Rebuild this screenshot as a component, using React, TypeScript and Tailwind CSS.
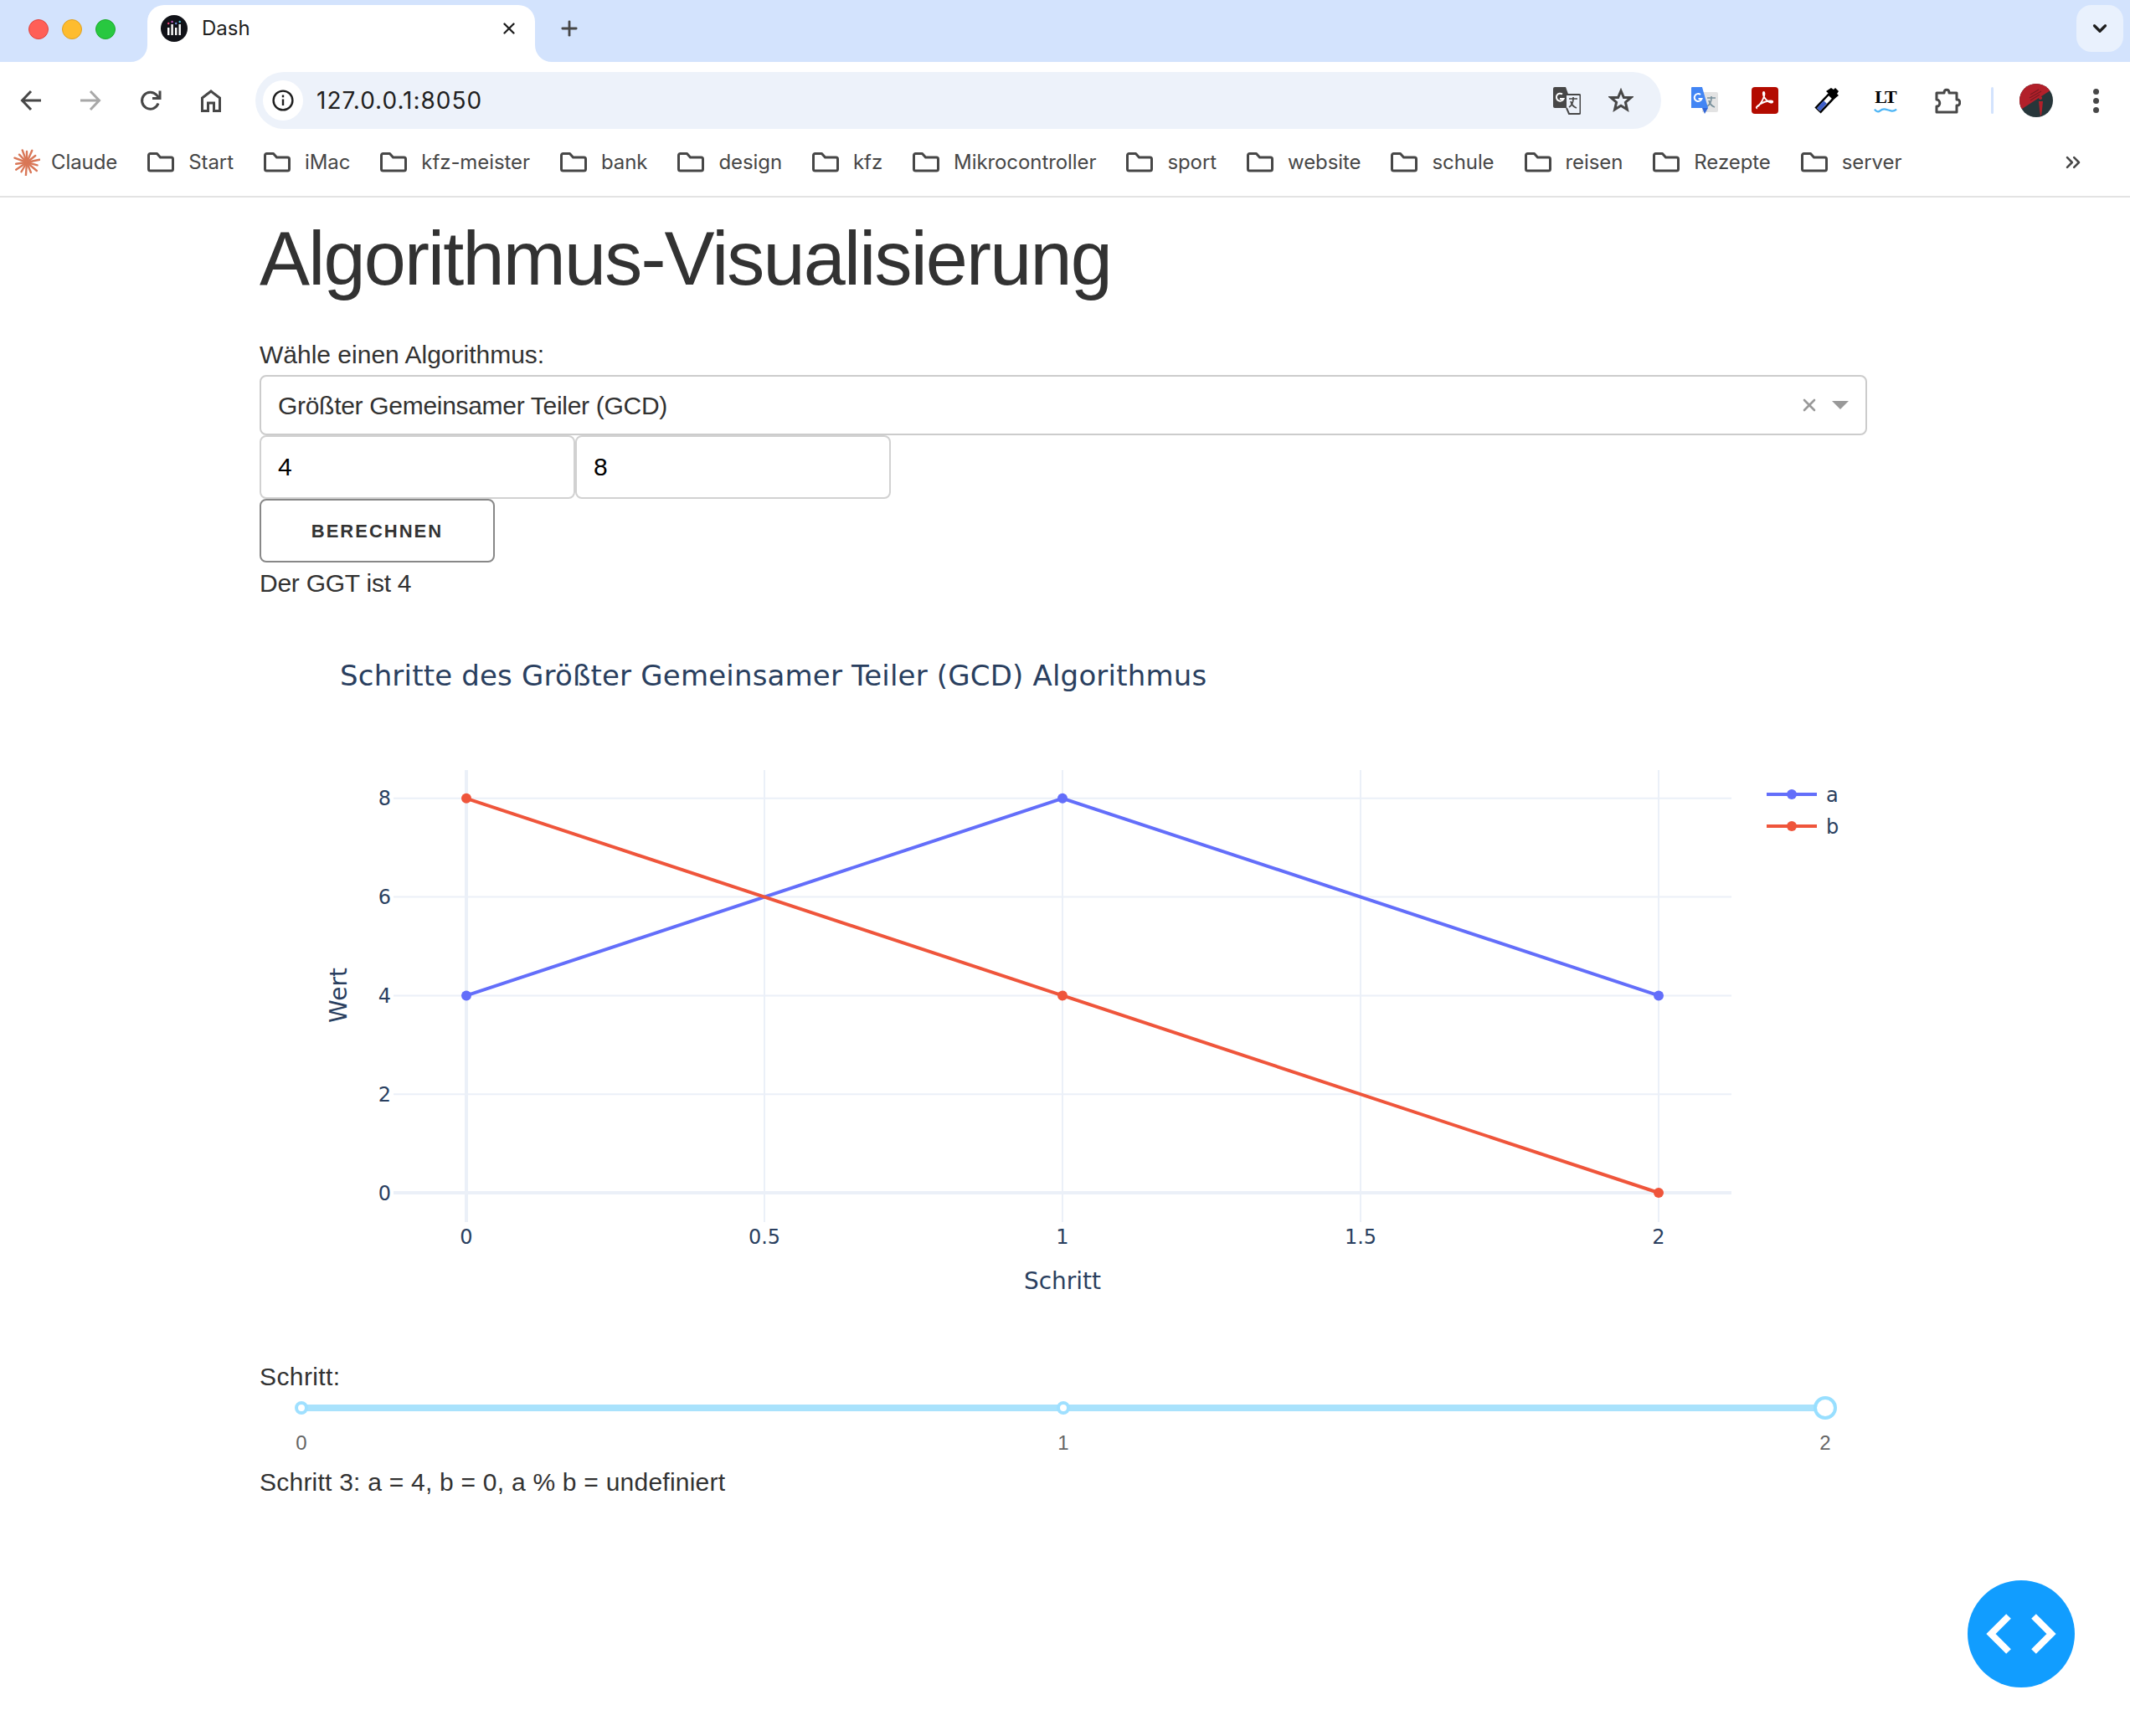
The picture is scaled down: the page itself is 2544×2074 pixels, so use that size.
import React from 'react';
import { X, Plus, ChevronDown, ChevronsRight } from 'lucide-react';

const bookmarks = ['Start', 'iMac', 'kfz-meister', 'bank', 'design', 'kfz', 'Mikrocontroller', 'sport', 'website', 'schule', 'reisen', 'Rezepte', 'server'];

const BLUE = '#636efa';
const RED = '#ef553b';
const INK = '#2a3f5f';
const GRID = '#ebf0f8';

// plot coordinates, measured in page pixels
const px = (v: number) => 557 + v * 712;
const py = (v: number) => 1425 - v * 58.9;

const stepsA = [4, 8, 4];
const stepsB = [8, 4, 0];

function Folder() {
  return (
    <svg width="32" height="24" viewBox="0 0 32 24" fill="none" stroke="#474747" strokeWidth="3" strokeLinejoin="round" className="shrink-0">
      <path d="M1.5 3.5a2 2 0 0 1 2-2h8l4 4.5h13a2 2 0 0 1 2 2v12a2 2 0 0 1-2 2h-25a2 2 0 0 1-2-2z" />
    </svg>
  );
}

function ClaudeMark() {
  const rays = [0, 24, 52, 78, 105, 130, 158, 184, 210, 236, 262, 290, 316, 340];
  return (
    <svg width="32" height="32" viewBox="-16 -16 32 32" className="shrink-0">
      {rays.map((r, i) => (
        <line key={r} x1="0" y1="0" x2="0" y2={i % 2 ? -15.5 : -13} stroke="#d97757" strokeWidth="2.4" strokeLinecap="round" transform={`rotate(${r})`} />
      ))}
    </svg>
  );
}

function TabStrip() {
  return (
    <div className="relative h-[74px] bg-[#d3e3fd] flex items-start">
      <div className="flex gap-[16px] pl-[34px] pt-[23px]">
        <div className="w-[24px] h-[24px] rounded-full bg-[#ff5f57] border border-[#e0443e]" />
        <div className="w-[24px] h-[24px] rounded-full bg-[#febc2e] border border-[#dea123]" />
        <div className="w-[24px] h-[24px] rounded-full bg-[#28c840] border border-[#1aab29]" />
      </div>
      <div className="relative ml-[38px] mt-[6px] w-[463px] h-[68px] bg-white rounded-t-[20px] flex items-center pl-[16px] pb-[12px]">
        <svg width="32" height="32" viewBox="0 0 32 32" className="shrink-0">
          <circle cx="16" cy="16" r="16" fill="#111218" />
          <g fill="#fff">
            <rect x="8" y="15" width="2.4" height="9" />
            <rect x="12.4" y="11" width="2.4" height="13" />
            <rect x="17" y="15" width="2.4" height="9" />
            <rect x="21.5" y="11" width="2.4" height="13" />
          </g>
          <circle cx="9.2" cy="10" r="1.2" fill="#ef3f7a" />
          <circle cx="13.6" cy="8" r="1.2" fill="#c056c0" />
          <circle cx="18.2" cy="10" r="1.2" fill="#6f8fe0" />
          <circle cx="22.7" cy="8" r="1.2" fill="#4fc3d9" />
        </svg>
        <span className="ml-[17px] text-[24px] text-[#1f1f1f] font-['Inter',sans-serif]">Dash</span>
        <X size={22} strokeWidth={2.6} color="#1f1f1f" className="ml-auto mr-[20px]" />
        <svg width="20" height="20" viewBox="0 0 20 20" className="absolute -left-[20px] bottom-0">
          <path d="M20 0v20H0a20 20 0 0 0 20-20z" fill="#fff" />
        </svg>
        <svg width="20" height="20" viewBox="0 0 20 20" className="absolute -right-[20px] bottom-0">
          <path d="M0 0v20h20A20 20 0 0 1 0 0z" fill="#fff" />
        </svg>
      </div>
      <Plus size={28} strokeWidth={2.4} color="#474747" className="ml-[27px] mt-[20px]" />
      <div className="ml-auto mr-[8px] mt-[6px] w-[56px] h-[56px] rounded-[18px] bg-[#e9f1fd] flex items-center justify-center">
        <ChevronDown size={26} strokeWidth={3} color="#1f1f1f" />
      </div>
    </div>
  );
}

function AddressBar() {
  return (
    <div className="ml-[41px] w-[1679px] h-[68px] rounded-full bg-[#edf2fa] flex items-center">
      <div className="ml-[9px] w-[48px] h-[48px] rounded-full bg-white flex items-center justify-center">
        <svg width="26" height="26" viewBox="0 0 26 26" fill="none" stroke="#1f1f1f" strokeWidth="2.4">
          <circle cx="13" cy="13" r="11.4" />
          <path d="M13 11.5v7.5" />
          <path d="M13 6.5v2.8" />
        </svg>
      </div>
      <span className="ml-[16px] text-[28px] text-[#1f1f1f] font-['Inter',sans-serif] tracking-[1px]">127.0.0.1:8050</span>
      <svg width="33" height="33" viewBox="0 0 33 33" className="ml-auto">
        <path d="M2 0h13l9 25H9l-7 0a2 2 0 0 1-2-2V2a2 2 0 0 1 2-2z" fill="#474747" />
        <path d="M16 9h15a1.5 1.5 0 0 1 1.500 1.500v20a1.500 1.500 0 0 1-1.500 1.500H19l-3-7" fill="#edf2fa" stroke="#474747" strokeWidth="2" />
        <path d="M11 8.500a4.500 4.500 0 1 0 1.500 5.500H8" fill="none" stroke="#fff" strokeWidth="2" />
        <path d="M19 14h10M24 12v2c0 5-2 8-5 10M21 17c1 4 4 7 7 8" fill="none" stroke="#474747" strokeWidth="1.700" />
      </svg>
      <svg width="30" height="30" viewBox="0 0 30 30" fill="none" stroke="#474747" strokeWidth="3" strokeLinejoin="miter" className="ml-[33px] mr-[33px]">
        <path d="M15 3.500l3.400 8h8.600l-6.600 5.700 2 8.600L15 21.200l-7.400 4.600 2-8.600L3 11.500h8.600z" />
      </svg>
    </div>
  );
}

function ExtensionIcons() {
  return (
    <>
      <svg width="32" height="32" viewBox="0 0 32 32" className="ml-[36px] shrink-0">
        <path d="M14 6h16a2 2 0 0 1 2 2v20a2 2 0 0 1-2 2H13z" fill="#e3e3e3" />
        <path d="M19 13h10M24 11v2c0 5-2 8-5 10M21 16c1 4 4 7 7 8" fill="none" stroke="#78909c" strokeWidth="1.700" />
        <path d="M1 0h12l7 25H0V1a1 1 0 0 1 1-1z" fill="#4285f4" />
        <path d="M13 25h7l-4 7z" fill="#3367d6" />
        <path d="M11 9a4.500 4.500 0 1 0 1.500 5H8.500" fill="none" stroke="#fff" strokeWidth="2" />
      </svg>
      <svg width="32" height="32" viewBox="0 0 32 32" className="ml-[40px] shrink-0">
        <rect width="32" height="32" rx="4" fill="#b30b00" />
        <path d="M6 24c3-1 7-7 9-13 .8-3 .5-5-.5-5s-1 3 .5 6c2 3 5 6 8 6.500 3 .3 3-2 0-2-4 0-9 1.500-13 4-3 2-5 4-4 4.500z" fill="none" stroke="#fff" strokeWidth="1.800" />
      </svg>
      <svg width="30" height="32" viewBox="0 0 30 32" className="ml-[42px] shrink-0">
        <path d="M23 9 5 28" stroke="#000" strokeWidth="10" />
        <path d="M20 12 6 27" stroke="#fff" strokeWidth="5" />
        <path d="M14 18 6 27" stroke="#3f5fc8" strokeWidth="5" />
        <path d="M21 1l3 2 2-2 4 4-2 3 2 2-5 4-10-9z" fill="#000" />
      </svg>
      <div className="ml-[41px] w-[30px] h-[30px] flex flex-col items-center shrink-0">
        <span className="text-[22px] leading-[22px] font-bold text-black font-['Liberation_Serif',serif] tracking-[-1px]">LT</span>
        <svg width="30" height="8" viewBox="0 0 30 8" fill="none" stroke="#4db5f5" strokeWidth="2.600" className="mt-[1px]">
          <path d="M0 3q4 5 7.500 2t7.500-2 7.500 2 7.500-2" />
        </svg>
      </div>
      <svg width="32" height="32" viewBox="0 0 32 32" fill="none" stroke="#474747" strokeWidth="3" strokeLinejoin="round" className="ml-[43px] shrink-0">
        <path d="M3 7h9c0-5 6-5 6 0h9v8c5-1 5 8 0 7v8H3v-7c5 .5 5-8 0-8z" />
      </svg>
      <div className="ml-[36px] w-[3px] h-[32px] rounded-full bg-[#d3e3fd] shrink-0" />
      <svg width="40" height="40" viewBox="0 0 40 40" className="ml-[31px] shrink-0">
        <defs>
          <clipPath id="avatar">
            <circle cx="20" cy="20" r="20" />
          </clipPath>
        </defs>
        <g clipPath="url(#avatar)">
          <rect width="40" height="40" fill="#27363a" />
          <path d="M0 0h40v6L0 32z" fill="#b2202a" />
          <path d="M13 13l10-6M12 17l14-8M13 20l11-7" stroke="#7c1a22" strokeWidth="1.400" />
          <path d="M25 19a2 2 0 1 1 .1 0zM23 21h5l-1 10-1 7h-1l-1-7z" fill="#b2202a" />
        </g>
      </svg>
      <div className="ml-[48px] flex flex-col gap-[4px] shrink-0">
        <div className="w-[7px] h-[7px] rounded-full bg-[#474747]" />
        <div className="w-[7px] h-[7px] rounded-full bg-[#474747]" />
        <div className="w-[7px] h-[7px] rounded-full bg-[#474747]" />
      </div>
    </>
  );
}

function Toolbar() {
  return (
    <div className="h-[92px] flex items-center pl-[24px]">
      <svg width="26" height="26" viewBox="0 0 26 26" fill="none" stroke="#474747" strokeWidth="3" className="shrink-0">
        <path d="M25 13H3M13 2 2.500 13 13 24" />
      </svg>
      <svg width="26" height="26" viewBox="0 0 26 26" fill="none" stroke="#a8a8a8" strokeWidth="3" className="ml-[45px] shrink-0">
        <path d="M1 13h22M13 2l10.500 11L13 24" />
      </svg>
      <svg width="26" height="26" viewBox="0 0 26 26" fill="none" stroke="#474747" strokeWidth="3" className="ml-[46px] shrink-0">
        <path d="M22 16.500A10 10 0 1 1 20 6.500L23 10" />
        <path d="M24 1.500V10.500H15" />
      </svg>
      <svg width="24" height="27" viewBox="0 0 24 27" fill="none" stroke="#474747" strokeWidth="3" className="ml-[47px] shrink-0">
        <path d="M1.500 25.500V10L12 2l10.500 8v15.500H15.500V16h-7v9.500z" />
      </svg>
      <AddressBar />
      <ExtensionIcons />
    </div>
  );
}

function BookmarksBar() {
  return (
    <div className="h-[70px] pb-[12px] border-b-2 border-[#e3e3e3] flex items-center pl-[16px] font-['Inter',sans-serif] text-[24px] tracking-[-0.08px] text-[#474747]">
      <div className="flex items-center gap-[13px]">
        <ClaudeMark />
        <span>Claude</span>
      </div>
      <div className="flex items-center gap-[36px] ml-[36px]">
        {bookmarks.map((name) => (
          <div key={name} className="flex items-center gap-[17px]">
            <Folder />
            <span>{name}</span>
          </div>
        ))}
      </div>
      <ChevronsRight size={28} strokeWidth={2.2} color="#474747" className="ml-auto mr-[54px]" />
    </div>
  );
}

function Chart() {
  const xTicks = [[0, '0'], [0.5, '0.5'], [1, '1'], [1.5, '1.5'], [2, '2']] as const;
  const yTicks = [0, 2, 4, 6, 8];
  const line = (values: number[]) => values.map((v, i) => `${px(i)},${py(v)}`).join(' ');

  return (
    <svg width="1920" height="900" viewBox="310 720 1920 900" className="block -mt-[1px]" style={{ fontFamily: '"DejaVu Sans", sans-serif' }}>
      <text x="406" y="819" fontSize="34" letterSpacing="0.18" fill={INK}>Schritte des Größter Gemeinsamer Teiler (GCD) Algorithmus</text>

      {xTicks.map(([v]) => (
        <line key={v} x1={px(v)} x2={px(v)} y1="920" y2="1460" stroke={GRID} strokeWidth={v === 0 ? 4 : 2} />
      ))}
      {yTicks.map((v) => (
        <line key={v} x1="470" x2="2068" y1={py(v)} y2={py(v)} stroke={GRID} strokeWidth={v === 0 ? 4 : 2} />
      ))}

      <polyline points={line(stepsA)} fill="none" stroke={BLUE} strokeWidth="4" />
      <polyline points={line(stepsB)} fill="none" stroke={RED} strokeWidth="4" />
      {stepsA.map((v, i) => <circle key={i} cx={px(i)} cy={py(v)} r="6" fill={BLUE} />)}
      {stepsB.map((v, i) => <circle key={i} cx={px(i)} cy={py(v)} r="6" fill={RED} />)}

      {yTicks.map((v) => (
        <text key={v} x="467" y={py(v) + 8.500} fontSize="24" fill={INK} textAnchor="end">{v}</text>
      ))}
      {xTicks.map(([v, label]) => (
        <text key={v} x={px(v)} y="1486" fontSize="24" fill={INK} textAnchor="middle">{label}</text>
      ))}

      <text x="1269" y="1540" fontSize="28" fill={INK} textAnchor="middle">Schritt</text>
      <text transform="translate(414 1189) rotate(-90)" fontSize="28" fill={INK} textAnchor="middle">Wert</text>

      <line x1="2110" x2="2170" y1="949" y2="949" stroke={BLUE} strokeWidth="4" />
      <circle cx="2140" cy="949" r="6" fill={BLUE} />
      <text x="2181" y="958" fontSize="24" fill={INK}>a</text>
      <line x1="2110" x2="2170" y1="987" y2="987" stroke={RED} strokeWidth="4" />
      <circle cx="2140" cy="987" r="6" fill={RED} />
      <text x="2181" y="996" fontSize="24" fill={INK}>b</text>
    </svg>
  );
}

function StepSlider() {
  return (
    <div className="mx-[50px] pt-[9px]">
      <div className="relative h-[8px] bg-[#a9e2fc] rounded-full">
        <div className="absolute -left-[8px] -top-[4px] w-[16px] h-[16px] rounded-full bg-white border-[4px] border-[#9fe0ff]" />
        <div className="absolute left-1/2 -ml-[8px] -top-[4px] w-[16px] h-[16px] rounded-full bg-white border-[4px] border-[#9fe0ff]" />
        <div className="absolute -right-[14px] -top-[10px] w-[28px] h-[28px] rounded-full bg-white border-[4px] border-[#98dfff]" />
      </div>
      <div className="flex justify-between mt-[24px] text-[24px] leading-[28px] text-[#666]">
        <div className="w-0 flex justify-center">0</div>
        <div className="w-0 flex justify-center">1</div>
        <div className="w-0 flex justify-center">2</div>
      </div>
    </div>
  );
}

export default function App() {
  return (
    <div className="relative w-[2544px] h-[2074px] bg-white overflow-hidden font-['Liberation_Sans',Arial,sans-serif] text-[#323232]">
      <TabStrip />
      <div className="bg-white rounded-t-[14px]">
        <Toolbar />
        <BookmarksBar />
      </div>

      <main className="ml-[310px] w-[1920px]">
        <h1 className="mt-[13px] text-[90px] leading-[120px] tracking-[-1.8px] font-normal">Algorithmus-Visualisierung</h1>

        <div className="mt-[31px] text-[30px] leading-[48px]">Wähle einen Algorithmus:</div>
        <div className="h-[72px] border-2 border-[#ccc] rounded-[8px] flex items-center pl-[20px] text-[30px] tracking-[-0.3px]">
          <span>Größter Gemeinsamer Teiler (GCD)</span>
          <X size={24} strokeWidth={2.6} color="#999" className="ml-auto mr-[15px]" />
          <div className="mr-[20px] w-0 h-0 border-x-[10px] border-x-transparent border-t-[10px] border-t-[#999]" />
        </div>

        <div className="flex">
          <input readOnly value="4" className="w-[377px] h-[76px] border-2 border-[#d1d1d1] rounded-[8px] px-[20px] text-[30px] text-black outline-none" />
          <input readOnly value="8" className="w-[377px] h-[76px] border-2 border-[#d1d1d1] rounded-[8px] px-[20px] text-[30px] text-black outline-none" />
        </div>
        <button className="block w-[281px] h-[76px] border-2 border-[#888] rounded-[8px] text-[22px] font-bold tracking-[2px] text-[#333]">BERECHNEN</button>
        <div className="mt-[1px] text-[30px] leading-[48px] tracking-[-0.25px]">Der GGT ist 4</div>

        <Chart />

        <div className="mt-[1px] text-[30px] leading-[48px] tracking-[0.4px]">Schritt:</div>
        <StepSlider />
        <div className="mt-[9px] text-[30px] leading-[48px] tracking-[0.23px]">Schritt 3: a = 4, b = 0, a % b = undefiniert</div>
      </main>

      <div className="absolute left-[2350px] top-[1888px] w-[128px] h-[128px] rounded-full bg-[#119dff] flex items-center justify-center">
        <svg width="84" height="48" viewBox="0 0 84 48" fill="none" stroke="#fff" strokeWidth="8">
          <path d="M27 3 6 24l21 21" />
          <path d="M57 3l21 21-21 21" />
        </svg>
      </div>
    </div>
  );
}
